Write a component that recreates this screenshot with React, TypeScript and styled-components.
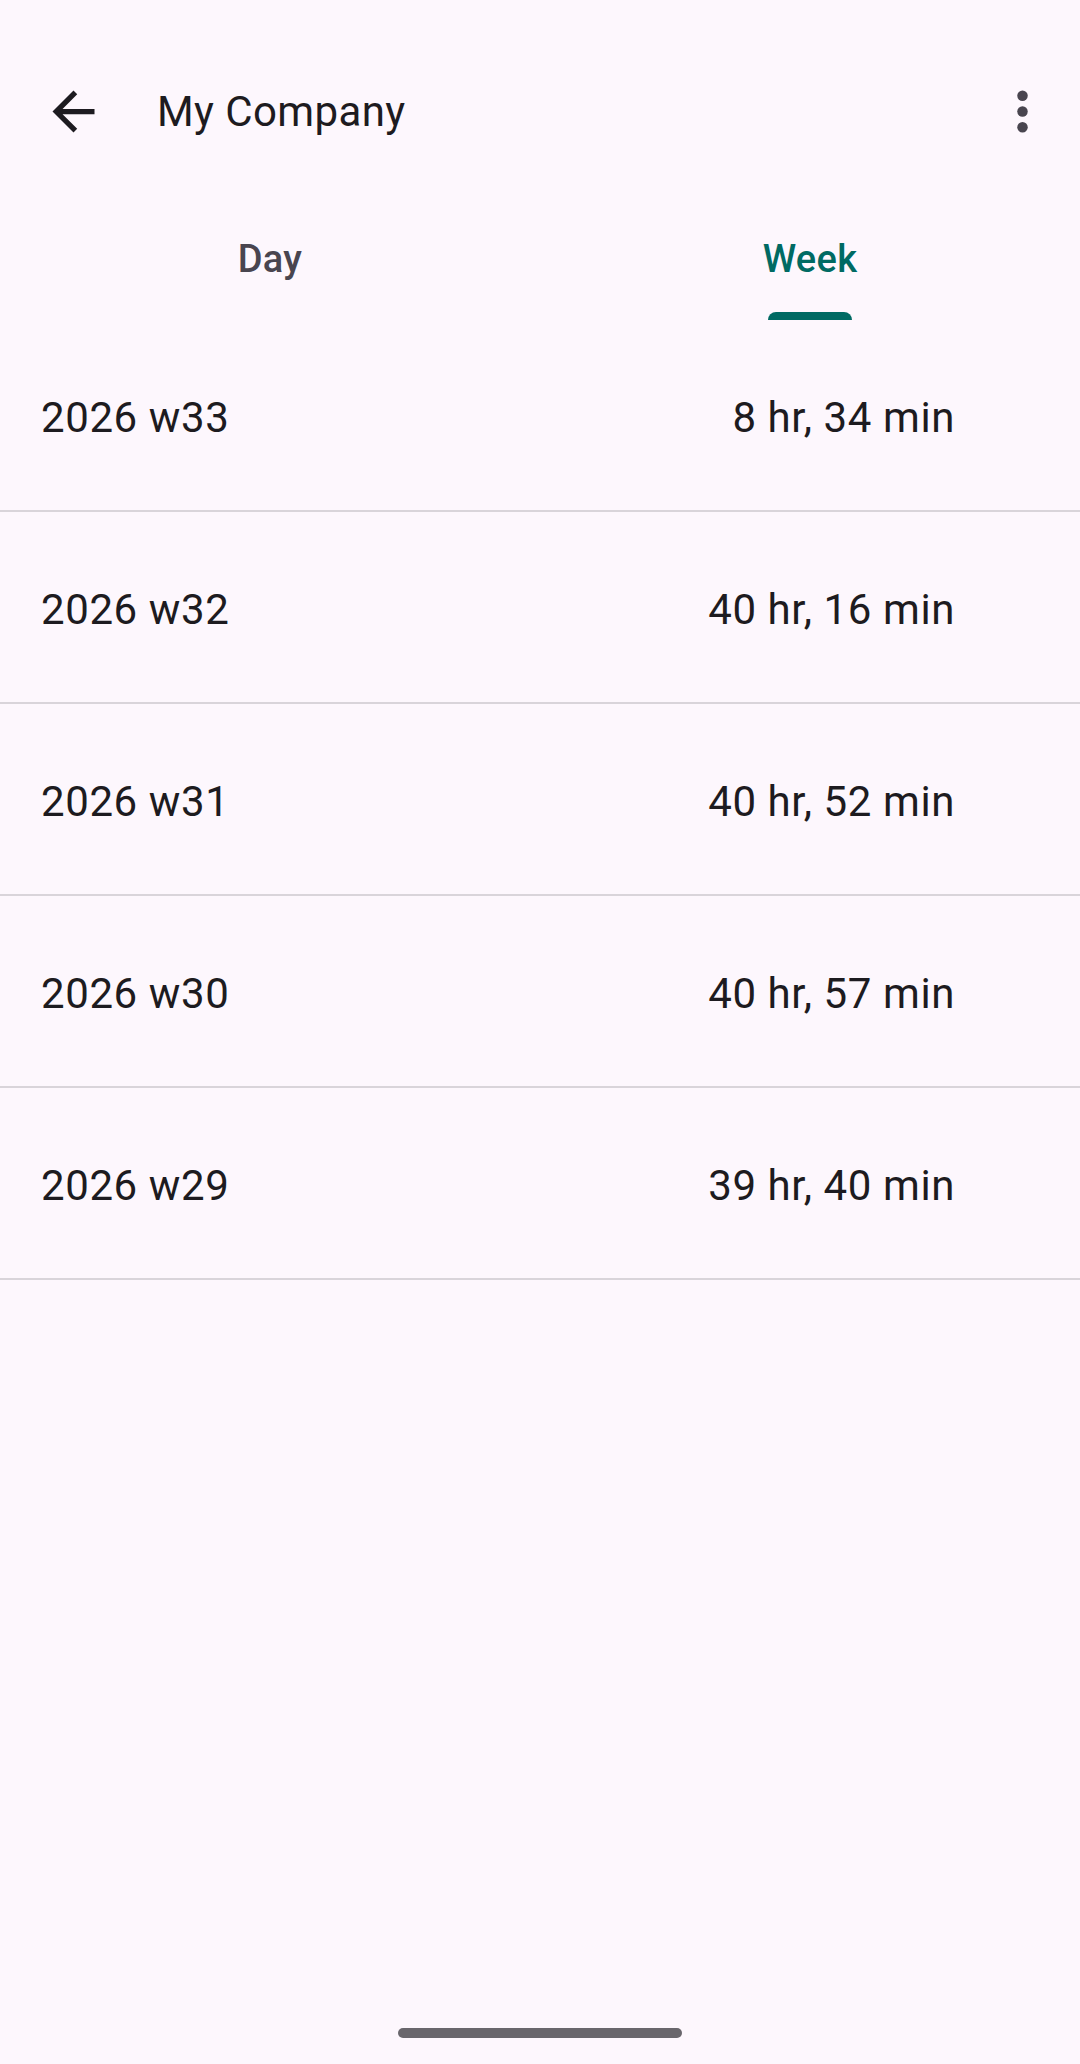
import styled, { createGlobalStyle } from "styled-components";

const GlobalStyle = createGlobalStyle`
    html, body {
        margin: 0;
        padding: 0;
        background: #fdf7fd;
    }
    body {
        font-family: Roboto, "Noto Sans", "Liberation Sans", sans-serif;
        color: #1d1b20;
    }
`;

const weeks = [
    { label: "2026 w33", total: "8 hr, 34 min" },
    { label: "2026 w32", total: "40 hr, 16 min" },
    { label: "2026 w31", total: "40 hr, 52 min" },
    { label: "2026 w30", total: "40 hr, 57 min" },
    { label: "2026 w29", total: "39 hr, 40 min" },
];

const App = () => {
    return (
        <Page>
            <GlobalStyle />
            <AppBar>
                <IconButton aria-label="Back">
                    <svg viewBox="0 0 24 24" width="63" height="63">
                        <path
                            fill="#1d1b20"
                            d="M20 11H7.83l5.59-5.59L12 4l-8 8 8 8 1.41-1.41L7.83 13H20v-2z"
                        />
                    </svg>
                </IconButton>
                <Title>My Company</Title>
                <IconButton aria-label="More options">
                    <svg viewBox="0 0 24 24" width="63" height="63">
                        <circle cx="12" cy="6" r="2" fill="#49454f" />
                        <circle cx="12" cy="12" r="2" fill="#49454f" />
                        <circle cx="12" cy="18" r="2" fill="#49454f" />
                    </svg>
                </IconButton>
            </AppBar>

            <Tabs>
                <Tab>
                    <TabLabel>Day</TabLabel>
                    <Indicator />
                </Tab>
                <Tab>
                    <TabLabel $active>Week</TabLabel>
                    <Indicator $active />
                </Tab>
            </Tabs>

            <List>
                {weeks.map((w) => (
                    <Row key={w.label}>
                        <RowText>{w.label}</RowText>
                        <RowText>{w.total}</RowText>
                    </Row>
                ))}
            </List>

            <Footer>
                <Handle />
            </Footer>
        </Page>
    );
};

const Page = styled.div`
    min-height: 100vh;
    display: flex;
    flex-direction: column;
    background: #fdf7fd;
`;

const AppBar = styled.header`
    height: 200px;
    box-sizing: border-box;
    padding: 22px 26px 0 42px;
    display: flex;
    align-items: center;
`;

const IconButton = styled.button`
    width: 63px;
    height: 63px;
    padding: 0;
    border: none;
    background: none;
    display: flex;
    align-items: center;
    justify-content: center;
    flex-shrink: 0;
    svg {
        display: block;
    }
`;

const Title = styled.h1`
    flex: 1;
    margin: 0 0 0 52px;
    font-size: 42px;
    font-weight: 400;
    letter-spacing: 0.4px;
    color: #1d1b20;
`;

const Tabs = styled.nav`
    height: 120px;
    display: grid;
    grid-template-columns: 1fr 1fr;
`;

const Tab = styled.div`
    display: flex;
    flex-direction: column;
    align-items: center;
`;

const TabLabel = styled.span<{ $active?: boolean }>`
    flex: 1;
    display: flex;
    align-items: center;
    padding-top: 5px;
    font-size: 38px;
    font-weight: 500;
    letter-spacing: 0.3px;
    color: ${(p) => (p.$active ? "#006a63" : "#49454f")};
`;

const Indicator = styled.div<{ $active?: boolean }>`
    width: 84px;
    height: 8px;
    border-radius: 8px 8px 0 0;
    background: ${(p) => (p.$active ? "#006a63" : "transparent")};
`;

const List = styled.div`
    flex: 1;
    display: flex;
    flex-direction: column;
`;

const Row = styled.div`
    height: 192px;
    box-sizing: border-box;
    padding: 4px 125px 0 41px;
    display: flex;
    align-items: center;
    justify-content: space-between;
    border-bottom: 2px solid #d9d4da;
`;

const RowText = styled.span`
    font-size: 42px;
    font-weight: 400;
    letter-spacing: 0.6px;
    color: #1d1b20;
`;

const Footer = styled.footer`
    display: flex;
    justify-content: center;
    padding-bottom: 26px;
`;

const Handle = styled.div`
    width: 284px;
    height: 10px;
    border-radius: 5px;
    background: #69666c;
`;

export default App;
